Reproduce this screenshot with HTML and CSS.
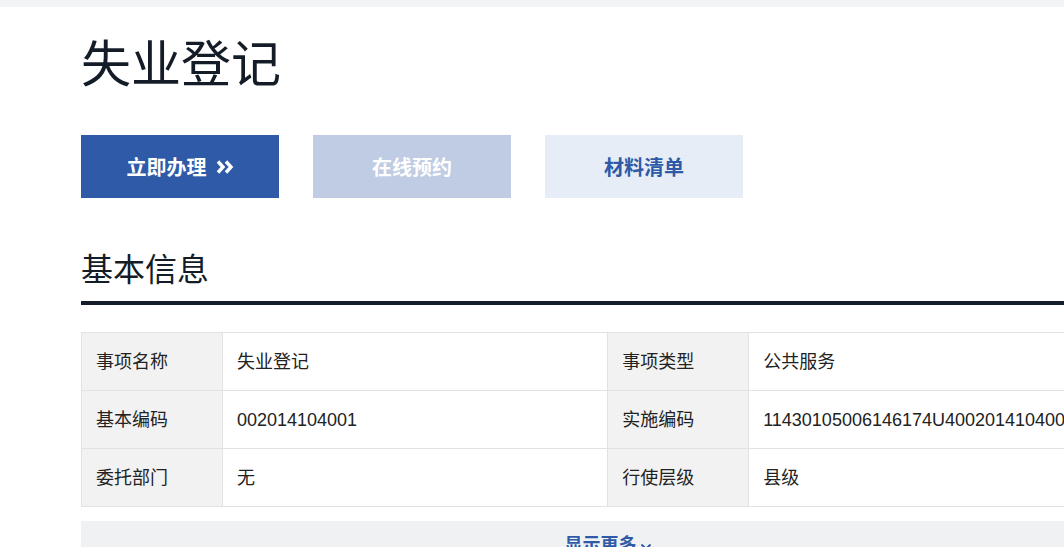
FILE: index.html
```html
<!DOCTYPE html>
<html lang="zh-CN">
<head>
    <meta charset="UTF-8">
    <title>失业登记</title>
    <link rel="stylesheet" href="styles.css">
</head>
<body>
    <div class="topbar"></div>
    <div class="main">
        <h1 class="title">失业登记</h1>

        <div class="actions">
            <a class="btn btn-primary" href="#">立即办理<svg class="arrow" width="18" height="14" viewBox="0 0 18 14"><path d="M2 1.5 L7 7 L2 12.5 M10 1.5 L15 7 L10 12.5" fill="none" stroke="#fff" stroke-width="3.4"/></svg></a>
            <a class="btn btn-disabled" href="#">在线预约</a>
            <a class="btn btn-light" href="#">材料清单</a>
        </div>

        <h2 class="section-title">基本信息</h2>

        <table class="info">
            <tr>
                <td class="label">事项名称</td>
                <td class="value">失业登记</td>
                <td class="label">事项类型</td>
                <td class="value">公共服务</td>
            </tr>
            <tr>
                <td class="label">基本编码</td>
                <td class="value">002014104001</td>
                <td class="label">实施编码</td>
                <td class="value">11430105006146174U400201410400</td>
            </tr>
            <tr>
                <td class="label">委托部门</td>
                <td class="value">无</td>
                <td class="label">行使层级</td>
                <td class="value">县级</td>
            </tr>
        </table>

        <div class="more">
            <a href="#">显示更多<svg class="chev" width="12" height="8" viewBox="0 0 12 8"><path d="M1.5 1.5 L6 6 L10.5 1.5" fill="none" stroke="#2e5aa7" stroke-width="2"/></svg></a>
        </div>
    </div>
</body>
</html>
```

FILE: styles.css
```css
*{margin: 0;padding: 0;box-sizing: border-box;}
html,body{overflow: hidden;}
body{background: #fff;font-family: "Liberation Sans", "Noto Sans CJK SC", sans-serif;color: #131c27;}
a{text-decoration: none;}

.topbar{height: 7px;background: #f3f4f6;}
.main{width: 1135px;padding-left: 81px;}

.title{font-size: 50px;font-weight: normal;line-height: 60px;margin-top: 28px;color: #131c27;}

.actions{display: flex;gap: 34px;margin-top: 40px;}
.btn{display: flex;align-items: center;justify-content: center;width: 198px;height: 63px;font-size: 20px;font-weight: bold;}
.btn-primary{background: #2e5aa7;color: #fff;}
.btn-disabled{background: #bfcce3;color: #fff;}
.btn-light{background: #e7edf6;color: #2e5aa7;}
.arrow{margin-left: 9px;}

.section-title{font-size: 32px;font-weight: normal;line-height: 40px;margin-top: 52px;padding-bottom: 11px;border-bottom: 4px solid #141d29;}

.info{width: 100%;border-collapse: collapse;margin-top: 27px;font-size: 18px;line-height: 24px;}
.info td{height: 58px;border: 1px solid #e2e2e2;padding: 0 14px;white-space: nowrap;color: #222;}
.info .label{width: 141px;background: #f2f2f2;}
.info .value{width: 386px;}

.more{margin-top: 14px;background: #f0f1f3;height: 60px;padding-top: 12px;text-align: center;line-height: 24px;}
.more a{font-size: 18px;font-weight: bold;color: #2e5aa7;}
.chev{margin-left: 3px;}
```
